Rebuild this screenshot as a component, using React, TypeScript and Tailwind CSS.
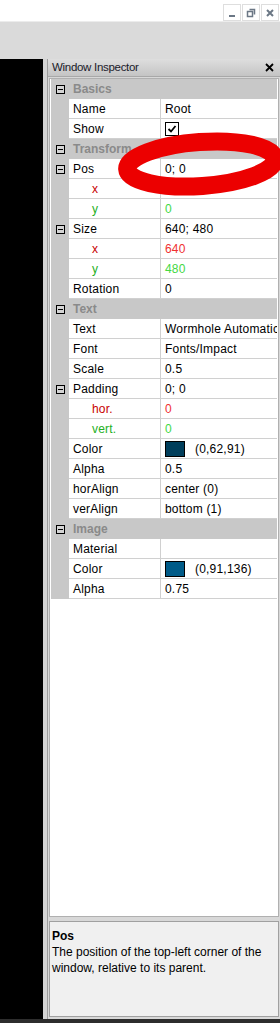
import React from "react";

type Row =
  | { group: string }
  | {
      label: string;
      value?: string;
      expand?: boolean;
      sub?: "x" | "y";
      check?: boolean;
      swatch?: "dark" | "blue";
    };

const rows: Row[] = [
  { group: "Basics" },
  { label: "Name", value: "Root" },
  { label: "Show", check: true },
  { group: "Transform" },
  { label: "Pos", value: "0; 0", expand: true },
  { label: "x", value: "0", sub: "x" },
  { label: "y", value: "0", sub: "y" },
  { label: "Size", value: "640; 480", expand: true },
  { label: "x", value: "640", sub: "x" },
  { label: "y", value: "480", sub: "y" },
  { label: "Rotation", value: "0" },
  { group: "Text" },
  { label: "Text", value: "Wormhole Automatic" },
  { label: "Font", value: "Fonts/Impact" },
  { label: "Scale", value: "0.5" },
  { label: "Padding", value: "0; 0", expand: true },
  { label: "hor.", value: "0", sub: "x" },
  { label: "vert.", value: "0", sub: "y" },
  { label: "Color", value: "(0,62,91)", swatch: "dark" },
  { label: "Alpha", value: "0.5" },
  { label: "horAlign", value: "center (0)" },
  { label: "verAlign", value: "bottom (1)" },
  { group: "Image" },
  { label: "Material", value: "" },
  { label: "Color", value: "(0,91,136)", swatch: "blue" },
  { label: "Alpha", value: "0.75" },
];

function Expander() {
  return (
    <div className="flex h-[9px] w-[9px] items-center justify-center border border-black bg-[#d4d4d4]">
      <div className="h-px w-[5px] bg-black" />
    </div>
  );
}

function WinButton({ children }: { children: React.ReactNode }) {
  return (
    <div className="flex h-[17px] w-[18px] items-center justify-center border border-[#dedede] bg-white">
      {children}
    </div>
  );
}

function PropRow({ row }: { row: Row }) {
  if ("group" in row) {
    return (
      <div className="flex h-[20px] items-center bg-[#c8c8c8]">
        <div className="flex w-[18px] justify-center">
          <Expander />
        </div>
        <span className="pl-[4px] text-[12px] font-bold text-[#8a8a8a]">{row.group}</span>
      </div>
    );
  }

  const labelColor =
    row.sub === "x" ? "text-[#c80000]" : row.sub === "y" ? "text-[#24b024]" : "text-black";
  const valueColor =
    row.sub === "x" ? "text-[#f03030]" : row.sub === "y" ? "text-[#44d844]" : "text-black";

  return (
    <div className="flex h-[20px]">
      <div className="flex w-[18px] shrink-0 items-center justify-center bg-[#c8c8c8]">
        {row.expand && <Expander />}
      </div>
      <div className="flex min-w-0 flex-1 border-b border-[#d0d0d0] bg-white">
        <div
          className={`flex w-[92px] shrink-0 items-center border-r border-[#d0d0d0] text-[12px] tracking-[0.2px] ${labelColor} ${
            row.sub ? "pl-[23px]" : "pl-[4px]"
          }`}
        >
          {row.label}
        </div>
        <div
          className={`flex min-w-0 flex-1 items-center overflow-hidden whitespace-nowrap pl-[4px] text-[12px] tracking-[0.2px] ${valueColor}`}
        >
          {row.check && (
            <div className="flex h-[14px] w-[14px] items-center justify-center border border-black bg-white">
              <svg width="10" height="10" viewBox="0 0 10 10">
                <path d="M1.5 5 L4 7.5 L8.5 2" stroke="black" strokeWidth="1.8" fill="none" />
              </svg>
            </div>
          )}
          {row.swatch && (
            <div
              className={`mr-[10px] h-[16px] w-[20px] shrink-0 border border-black ${
                row.swatch === "dark" ? "bg-[#003e5b]" : "bg-[#005b88]"
              }`}
            />
          )}
          {row.value}
        </div>
      </div>
    </div>
  );
}

export default function App() {
  return (
    <div className="relative flex h-[1023px] w-[280px] flex-col overflow-hidden bg-[#dadada] font-['Liberation_Sans',Arial,sans-serif]">
      <div className="flex h-[22px] justify-end gap-[1px] border-b border-[#ececec] bg-white pr-[1px] pt-[4px]">
        <WinButton>
          <svg width="10" height="10" viewBox="0 0 10 10">
            <rect x="2" y="7" width="6" height="2" fill="#6b7785" />
          </svg>
        </WinButton>
        <WinButton>
          <svg width="10" height="10" viewBox="0 0 10 10">
            <path d="M3.5 1.5 H8.5 V6.5 M1.5 3.5 H6.5 V8.5 H1.5 Z" stroke="#6b7785" strokeWidth="1.5" fill="none" />
          </svg>
        </WinButton>
        <WinButton>
          <svg width="10" height="10" viewBox="0 0 10 10">
            <path d="M2 2 L8 8 M8 2 L2 8" stroke="#6b7785" strokeWidth="2" />
          </svg>
        </WinButton>
      </div>

      <div className="h-[37px]" />

      <div className="flex min-h-0 flex-1">
        <div className="w-[43px] bg-black" />
        <div className="w-[4px] bg-[#d4d4d4]" />
        <div className="flex min-w-0 flex-1 flex-col border-l border-[#9c9c9c] bg-[#d8d8d8]">
          <div className="flex h-[18px] items-center justify-between border-b border-[#a8a8a8] bg-gradient-to-b from-[#dedede] to-[#c4c4c4] pl-[4px] pr-[6px]">
            <span className="text-[11.5px] tracking-[-0.3px] text-[#1a1a2a]">Window Inspector</span>
            <svg width="9" height="9" viewBox="0 0 9 9">
              <path d="M1 1 L8 8 M8 1 L1 8" stroke="black" strokeWidth="1.8" />
            </svg>
          </div>

          <div className="mx-[1px] mt-[1px] flex min-h-0 flex-1 flex-col overflow-hidden border border-[#b0b0b0] bg-white">
            <div className="border-l border-white border-r">
              {rows.map((row, i) => (
                <PropRow key={i} row={row} />
              ))}
            </div>
          </div>

          <div className="mx-[1px] mb-[2px] mt-[4px] h-[96px] border border-[#a0a0a0] bg-[#f0f0f0] px-[2px] pt-[6px] text-[12px] leading-[16px] text-black">
            <div className="font-bold">Pos</div>
            <div>The position of the top-left corner of the window, relative to its parent.</div>
          </div>
        </div>
      </div>

      <div className="h-[4px] bg-[#2d2d2d]" />

      <svg
        className="pointer-events-none absolute left-0 top-0"
        width="280"
        height="1023"
        viewBox="0 0 280 1023"
      >
        <ellipse
          cx="201"
          cy="164"
          rx="74"
          ry="22"
          transform="rotate(-4 201 164)"
          stroke="#ec0000"
          strokeWidth="18"
          fill="none"
        />
      </svg>
    </div>
  );
}
